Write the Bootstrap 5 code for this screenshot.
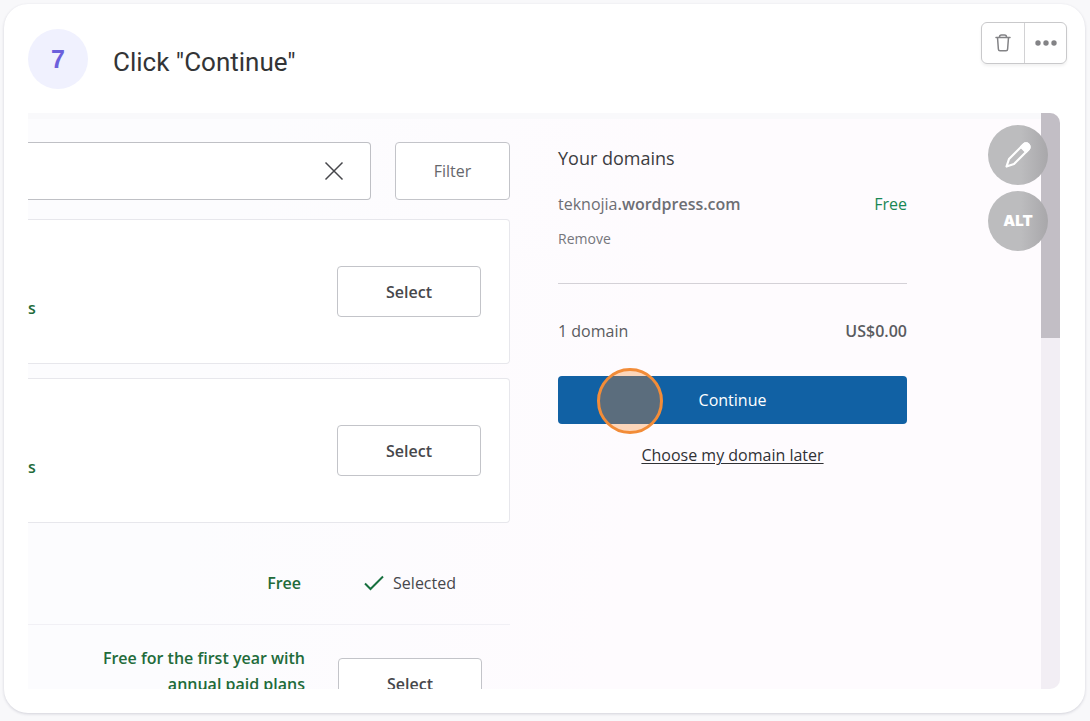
<!DOCTYPE html>
<html lang="en">
<head>
<meta charset="utf-8">
<meta name="viewport" content="width=device-width, initial-scale=1">
<title>Click "Continue"</title>
<link href="https://cdn.jsdelivr.net/npm/bootstrap@5.3.0/dist/css/bootstrap.min.css" rel="stylesheet">
<style>
  body { background: #f8f8fa; font-family: "Open Sans", "Noto Sans", sans-serif; font-size: 16px; line-height: 26px; color: #46474b; }
  .step { margin: 4px 5px 8px 4px; padding: 18px 18px 24px 24px; background: #fff; border-radius: 24px; box-shadow: 0 1px 3px rgba(40, 40, 70, .18); }
  .step-head { height: 91px; }
  .step-num { width: 60px; height: 60px; margin-top: 7px; background: #f0f1fe; color: #6c60dc; font: 700 25px/60px "Liberation Sans", sans-serif; }
  .step-title { margin: 22px 0 0 25px; font: 400 26px/36px Roboto, sans-serif; color: #333436; }
  .tools { border: 1px solid #c9c9cb; border-radius: 6px; box-shadow: 0 2px 3px rgba(0, 0, 0, .06); overflow: hidden; }
  .tools button { width: 42px; height: 40px; padding: 0; border: 0; border-radius: 0; color: #838386; }
  .tools button + button { border-left: 1px solid #d2d2d4; }
  .shot { margin-right: 7px; aspect-ratio: 43 / 24; border-radius: 0 10px 10px 0; background: linear-gradient(#f9f9fb, #f9f9fb) 0 0 / 100% 6px no-repeat, linear-gradient(100deg, #fcfcfe 20%, #fefbfe 60%); }
  .shot-grid { display: grid; grid-template-columns: minmax(0, 1fr) 349px; column-gap: 48px; padding: 29px 153px 0 0; }
  .search { flex: 1; height: 58px; border: 1px solid #bfc0c5; border-left: 0; border-radius: 0 4px 4px 0; background: #fff; }
  .search input { min-width: 0; border: 0; background: transparent; }
  .search button { width: 32px; height: 32px; line-height: 20px; margin: 0 23px 0 0; padding: 0; border: 0; color: #46474b; }
  .search svg { display: block; margin: auto; }
  .outline { border: 1px solid #c3c4c9; border-radius: 4px; background: #fff; color: #46474b; padding: 0; font-size: 16px; line-height: 26px; }
  .filter { width: 115px; color: #66676c; }
  .pick { width: 144px; height: 51px; font-weight: 600; }
  .offer { height: 145px; margin-top: 19px; padding-right: 28px; background: #fff; border: 1px solid #e7e7ec; border-left: 0; border-radius: 0 4px 4px 0; }
  .offer + .offer { margin-top: 14px; }
  .price { color: #226b3a; font-weight: 600; }
  .tail { padding-top: 32px; }
  .chosen { height: 102px; padding: 18px 54px 0 0; border-bottom: 1px solid #f1f0f5; }
  .chosen-state { width: 92px; margin-left: 63px; }
  .last { padding: 20px 28px 0 0; }
  .last .pick { margin: 13px 0 0 33px; }
  .side h2 { margin: 3px 0 0; font-size: 18px; line-height: 26px; font-weight: 400; color: #3c3d41; }
  .side .host { margin-top: 20px; color: #6d6e74; }
  .side .host b { font-weight: 600; }
  .side .drop { color: #75767c; font-size: 14px; line-height: 20px; padding: 0; margin-top: 12px; border: 0; }
  .side hr { margin: 34px 0 0; color: #aaa8b0; opacity: .5; }
  .total { margin-top: 34px; color: #5a5b60; }
  .go { height: 48px; margin-top: 32px; padding: 0; background: #1161a4; color: #fff; border: 0; border-radius: 4px; font-size: 16px; line-height: 26px; }
  .halo { left: 39px; bottom: -10px; width: 66px; height: 66px; border: 3px solid #f28c38; border-radius: 50%; background: rgba(248, 138, 44, .32); }
  .later { margin-top: 18px; }
  .later a { color: #303135; text-underline-offset: 2px; }
  .track { top: 0; right: 0; bottom: 0; width: 19px; background: #f2eef4; }
  .thumb { height: 39%; background: #c2bec5; }
  .float-tools { top: 12px; right: 12px; gap: 6px; }
  .float-tools button { width: 60px; height: 60px; padding: 0; border: 0; border-radius: 50%; color: #fff; background: linear-gradient(90deg, #bcbcbe 55%, #a8a7aa); font: 900 15px/20px Inter, sans-serif; }
</style>
</head>
<body>
<main class="step">
  <header class="step-head d-flex align-items-start">
    <div class="step-num rounded-circle text-center flex-shrink-0">7</div>
    <h1 class="step-title">Click "Continue"</h1>
    <div class="tools d-flex ms-auto">
      <button class="btn d-flex align-items-center justify-content-center" type="button" aria-label="Delete step">
        <svg width="18" height="20" viewBox="0 0 18 20" fill="none" stroke="currentColor" stroke-width="1.500" stroke-linejoin="round" stroke-linecap="round"><path d="M2 4.500h14M5.500 4.500V4a2 2 0 0 1 2-2h3a2 2 0 0 1 2 2v.5M3.500 4.500l.9 11.800a1.600 1.600 0 0 0 1.600 1.500h6a1.600 1.600 0 0 0 1.600-1.500L14.500 4.500"/></svg>
      </button>
      <button class="btn d-flex align-items-center justify-content-center" type="button" aria-label="More actions">
        <svg width="22" height="6" viewBox="0 0 22 6" fill="currentColor"><circle cx="3" cy="3" r="2.700"/><circle cx="11" cy="3" r="2.700"/><circle cx="19" cy="3" r="2.700"/></svg>
      </button>
    </div>
  </header>

  <section class="shot position-relative overflow-hidden">
    <div class="shot-grid">
      <div>
        <div class="d-flex gap-4">
          <div class="search d-flex align-items-center">
            <input class="form-control" type="text" aria-label="Search domains">
            <button class="btn" type="button" aria-label="Clear search">
              <svg width="20" height="20" viewBox="0 0 20 20" stroke="currentColor" stroke-width="1.500"><path d="M1.500 1.500l17 17M18.500 1.500l-17 17"/></svg>
            </button>
          </div>
          <button class="btn outline filter" type="button">Filter</button>
        </div>
        <div class="offer d-flex align-items-center justify-content-between">
          <span class="price tail">s</span>
          <button class="btn outline pick" type="button">Select</button>
        </div>
        <div class="offer d-flex align-items-center justify-content-between">
          <span class="price tail">s</span>
          <button class="btn outline pick" type="button">Select</button>
        </div>
        <div class="chosen d-flex align-items-center justify-content-end">
          <span class="price">Free</span>
          <span class="chosen-state d-flex align-items-center justify-content-between">
            <svg width="20" height="16" viewBox="0 0 20 16" fill="none" stroke="#17703f" stroke-width="2"><path d="M1 8.500l5.500 5.500L19 1.500"/></svg>
            <span>Selected</span>
          </span>
        </div>
        <div class="last d-flex align-items-start justify-content-end">
          <span class="price text-end">Free for the first year with<br>annual paid plans</span>
          <button class="btn outline pick" type="button">Select</button>
        </div>
      </div>

      <div class="side">
        <h2>Your domains</h2>
        <div class="host d-flex justify-content-between">
          <span>teknojia<b>.wordpress.com</b></span>
          <span class="text-success">Free</span>
        </div>
        <button class="btn drop d-block" type="button">Remove</button>
        <hr>
        <div class="total d-flex justify-content-between">
          <span>1 domain</span>
          <span class="fw-semibold">US$0.00</span>
        </div>
        <div class="position-relative">
          <button class="btn go w-100" type="button">Continue</button>
          <span class="halo position-absolute"></span>
        </div>
        <div class="later text-center"><a href="#">Choose my domain later</a></div>
      </div>
    </div>

    <div class="track position-absolute"><div class="thumb"></div></div>
    <div class="float-tools position-absolute d-grid">
      <button class="btn d-flex align-items-center justify-content-center" type="button" aria-label="Edit image">
        <svg width="26" height="26" viewBox="0 0 26 26" fill="none" stroke="#fff" stroke-width="2.200" stroke-linejoin="round"><path d="M1.500 24.500L4 17 18.500 2.500a3.500 3.500 0 0 1 5 5L9 22z"/><path d="M16 5l5 5 2.500-2.500a3.500 3.500 0 0 0-5-5z" fill="#fff"/></svg>
      </button>
      <button class="btn" type="button">ALT</button>
    </div>
  </section>
</main>
<script src="https://cdn.jsdelivr.net/npm/bootstrap@5.3.0/dist/js/bootstrap.bundle.min.js"></script>
</body>
</html>
